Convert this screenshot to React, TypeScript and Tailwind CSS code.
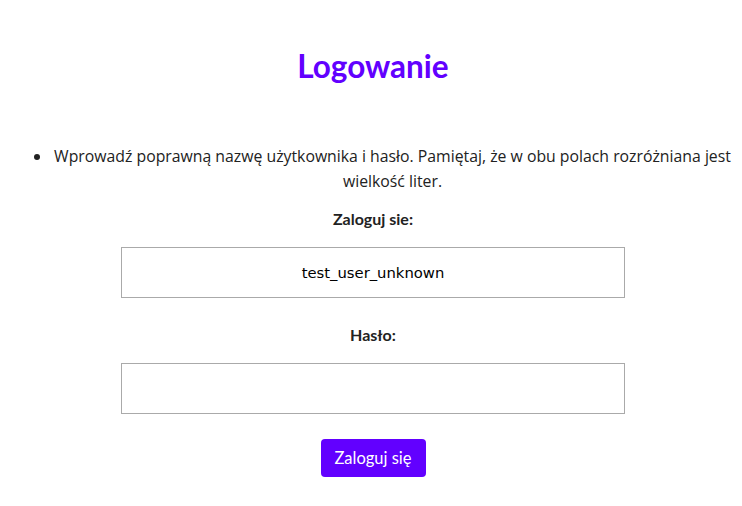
export default function App() {
  return (
    <div className="w-[742px] h-[506px] bg-white text-[#222] font-['Lato',sans-serif] flex flex-col items-center pl-[4px]">
      <h1 className="mt-[46px] text-[31.5px] leading-[40px] font-bold text-[#6200ff]">Logowanie</h1>
      <ul className="mt-[58px] w-full pl-[48px] pr-[9px] list-disc text-center text-[15.8px] leading-[25px] font-['Open_Sans',sans-serif]">
        <li>
          Wprowadź poprawną nazwę użytkownika i hasło. Pamiętaj, że w obu polach rozróżniana jest wielkość liter.
        </li>
      </ul>
      <div className="mt-[14px] text-[16px] leading-[22px] font-bold">Zaloguj sie:</div>
      <input
        className="mt-[17px] w-[504px] h-[51px] border border-[#aaa] text-center text-[14.8px] text-black font-['DejaVu_Sans',sans-serif] outline-none"
        defaultValue="test_user_unknown"
      />
      <div className="mt-[26px] text-[16px] leading-[22px] font-bold">Hasło:</div>
      <input
        type="password"
        className="mt-[17px] w-[504px] h-[51px] border border-[#aaa] text-center outline-none"
      />
      <button className="mt-[25px] w-[105px] h-[38px] rounded-[4px] bg-[#6200ff] text-white text-[16.5px]">
        Zaloguj się
      </button>
    </div>
  );
}
